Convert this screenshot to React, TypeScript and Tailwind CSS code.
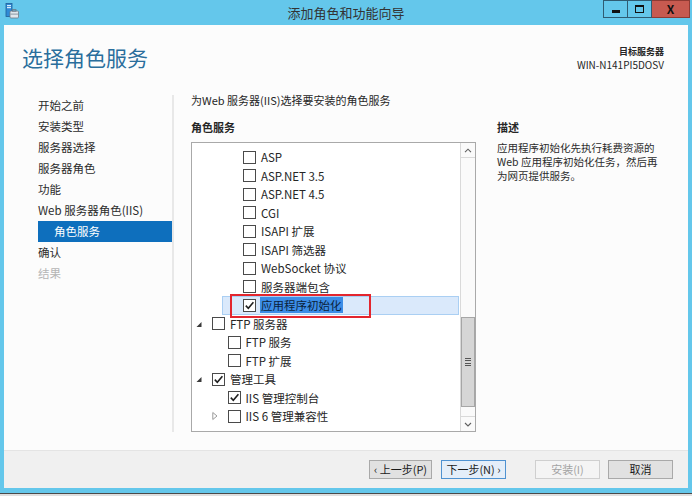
import React from "react";

type Row = {
  level: 1 | 2 | 3;
  label: string;
  checked?: boolean;
  selected?: boolean;
  expander?: "open" | "closed";
};

const rows: Row[] = [
  { level: 3, label: "ASP" },
  { level: 3, label: "ASP.NET 3.5" },
  { level: 3, label: "ASP.NET 4.5" },
  { level: 3, label: "CGI" },
  { level: 3, label: "ISAPI 扩展" },
  { level: 3, label: "ISAPI 筛选器" },
  { level: 3, label: "WebSocket 协议" },
  { level: 3, label: "服务器端包含" },
  { level: 3, label: "应用程序初始化", checked: true, selected: true },
  { level: 1, label: "FTP 服务器", expander: "open" },
  { level: 2, label: "FTP 服务" },
  { level: 2, label: "FTP 扩展" },
  { level: 1, label: "管理工具", checked: true, expander: "open" },
  { level: 2, label: "IIS 管理控制台", checked: true },
  { level: 2, label: "IIS 6 管理兼容性", expander: "closed" },
];

const indent: Record<number, string> = {
  1: "pl-[3px]",
  2: "pl-[18.5px]",
  3: "pl-[34px]",
};

function Checkbox({ checked }: { checked?: boolean }) {
  return (
    <span className="w-[13px] h-[13px] border border-[#4a4a4a] bg-white flex items-center justify-center shrink-0">
      {checked && (
        <svg width="11" height="11" viewBox="0 0 11 11">
          <polyline points="1.8,5.6 4.3,8.2 9.4,2.2" fill="none" stroke="#1f1f1f" strokeWidth="1.6" />
        </svg>
      )}
    </span>
  );
}

function Expander({ kind }: { kind?: "open" | "closed" }) {
  return (
    <span className="w-[16px] h-[16px] flex items-center justify-start shrink-0">
      {kind === "open" && (
        <svg width="8" height="8" viewBox="0 0 8 8">
          <polygon points="5.5,2 5.5,7 0.5,7" fill="#3a3a3a" />
        </svg>
      )}
      {kind === "closed" && (
        <svg width="8" height="10" viewBox="0 0 8 10">
          <polygon points="0.8,1.5 5,5 0.8,8.5" fill="none" stroke="#9a9a9a" strokeWidth="1" />
        </svg>
      )}
    </span>
  );
}

function TreeRow({ row }: { row: Row }) {
  return (
    <div className={`relative h-[18.5px] flex ${indent[row.level]}`}>
      <div
        className={`flex-1 flex items-center -ml-[4px] pl-[4px] mr-[1px] border ${
          row.selected ? "bg-[#dae9fb] border-[#aacff3]" : "border-transparent"
        }`}
      >
        <Expander kind={row.expander} />
        <Checkbox checked={row.checked} />
        <span
          className={`ml-[4px] text-[11.5px] leading-[16px] px-[1px] ${
            row.selected ? "bg-[#3c8de6] text-[#0b1f3a]" : "text-[#262626]"
          }`}
        >
          {row.label}
        </span>
      </div>
      {row.selected && (
        <div className="absolute left-[38px] top-[-2px] w-[141px] h-[24px] border-2 border-[#e3262e] pointer-events-none" />
      )}
    </div>
  );
}

function Button({
  children,
  variant = "normal",
}: {
  children: React.ReactNode;
  variant?: "normal" | "default" | "disabled";
}) {
  const cls =
    variant === "default"
      ? "bg-[#e4eef9] border-[#4f92d1] text-[#1a1a1a]"
      : variant === "disabled"
      ? "bg-[#f4f4f4] border-[#cfcfcf] text-[#a3a3a3]"
      : "bg-[#e1e1e1] border-[#a9a9a9] text-[#1a1a1a]";
  return (
    <div className={`h-[19px] flex items-center justify-center border text-[11px] leading-none ${cls}`}>
      {children}
    </div>
  );
}

function TitleIcon() {
  return (
    <svg width="14" height="16" viewBox="0 0 14 16">
      <rect x="1" y="0.5" width="6" height="13" fill="#2f8ad6" stroke="#1f5f9a" strokeWidth="0.8" />
      <rect x="2" y="2" width="4" height="1.2" fill="#d9ecfb" />
      <rect x="2" y="4" width="4" height="1.2" fill="#d9ecfb" />
      <rect x="5" y="8" width="8.5" height="7" rx="1" fill="#dfe6ec" stroke="#6c7a86" strokeWidth="0.8" />
      <rect x="7.5" y="6.6" width="3.5" height="1.6" fill="none" stroke="#6c7a86" strokeWidth="0.8" />
      <rect x="5.4" y="10.6" width="7.7" height="1" fill="#8a98a4" />
    </svg>
  );
}

export default function App() {
  return (
    <div className="w-[692px] h-[496px] flex flex-col bg-[#64c7eb] overflow-hidden font-['Noto_Sans_CJK_SC',sans-serif] text-[#262626]">
      {/* Title bar */}
      <div className="h-[25px] grid grid-cols-[1fr_auto_1fr] shrink-0">
        <div className="flex items-start pl-[5px] pt-[3px]">
          <TitleIcon />
        </div>
        <div className="text-[13px] leading-[25px] text-[#333333]">添加角色和功能向导</div>
        <div className="flex justify-end items-start pr-[2px]">
          <div className="w-[25px] h-[18px] border border-[#2f5b72] flex items-end justify-center pb-[4px]">
            <span className="w-[8px] h-[3px] bg-[#111]" />
          </div>
          <div className="w-[24px] h-[18px] border border-l-0 border-[#2f5b72] flex items-center justify-center">
            <span className="w-[9px] h-[8px] border border-t-[2px] border-[#111]" />
          </div>
          <div className="w-[38px] h-[18px] bg-[#c75a50] border border-l-0 border-[#8e3a33] flex items-center justify-center text-[12px] font-bold text-[#111] leading-none">
            X
          </div>
        </div>
      </div>

      {/* Content */}
      <div className="mx-[4px] h-[463px] flex flex-col bg-[#fcfcfc]">
        {/* Header */}
        <div className="h-[67px] flex justify-between shrink-0">
          <div className="pl-[18px] pt-[18px] text-[21px] leading-[28px] text-[#2a6e9c]">选择角色服务</div>
          <div className="pr-[24px] pt-[20px] flex flex-col items-end">
            <div className="text-[9px] leading-[13px] font-semibold text-[#262626]">目标服务器</div>
            <div className="text-[10px] leading-[13px] text-[#262626]">WIN-N141PI5DOSV</div>
          </div>
        </div>

        {/* Body */}
        <div className="h-[358px] flex shrink-0">
          {/* Nav */}
          <div className="w-[168px] pl-[34px] pt-[2.5px] flex flex-col text-[11.5px]">
            {["开始之前", "安装类型", "服务器选择", "服务器角色", "功能", "Web 服务器角色(IIS)"].map((t) => (
              <div key={t} className="h-[21px] leading-[21px] text-[#2b2b2b]">
                {t}
              </div>
            ))}
            <div className="h-[21px] leading-[21px] bg-[#0e6fbd] text-white pl-[16px]">角色服务</div>
            <div className="h-[21px] leading-[21px] text-[#2b2b2b]">确认</div>
            <div className="h-[21px] leading-[21px] text-[#b5b5b5]">结果</div>
          </div>
          <div className="w-[2px] h-[337px] mt-[3px] bg-[#e8e8e8]" />

          {/* Main */}
          <div className="flex-1 pl-[17px] flex flex-col">
            <div className="text-[11px] leading-[16px] text-[#262626]">为Web 服务器(IIS)选择要安装的角色服务</div>
            <div className="flex mt-[11px]">
              <div className="w-[285px] flex flex-col">
                <div className="text-[11px] leading-[16px] font-bold text-[#262626]">角色服务</div>
                <div className="mt-[7px] h-[290px] border border-[#a9a9a9] bg-white flex">
                  <div className="flex-1 pt-[5px] overflow-hidden">
                    {rows.map((r) => (
                      <TreeRow key={r.label} row={r} />
                    ))}
                  </div>
                  <div className="w-[15px] flex flex-col border-l border-[#d9d9d9] bg-[#fafafa]">
                    <div className="h-[15px] border-b border-[#d9d9d9] flex items-center justify-center">
                      <svg width="8" height="5" viewBox="0 0 8 5">
                        <polyline points="1,4.2 4,1.2 7,4.2" fill="none" stroke="#606060" strokeWidth="1.1" />
                      </svg>
                    </div>
                    <div className="h-[159px]" />
                    <div className="h-[90px] bg-[#d6d6d6] border border-[#a6a6a6] flex items-center justify-center">
                      <div className="flex flex-col gap-[1.5px]">
                        <span className="w-[6px] h-[1px] bg-[#555]" />
                        <span className="w-[6px] h-[1px] bg-[#555]" />
                        <span className="w-[6px] h-[1px] bg-[#555]" />
                        <span className="w-[6px] h-[1px] bg-[#555]" />
                      </div>
                    </div>
                    <div className="h-[10px] border-b border-[#d9d9d9]" />
                    <div className="flex-1 flex items-center justify-center">
                      <svg width="8" height="5" viewBox="0 0 8 5">
                        <polyline points="1,1 4,4 7,1" fill="none" stroke="#606060" strokeWidth="1.1" />
                      </svg>
                    </div>
                  </div>
                </div>
              </div>
              <div className="ml-[21px] w-[170px] flex flex-col">
                <div className="text-[11px] leading-[16px] font-bold text-[#262626]">描述</div>
                <div className="mt-[6px] text-[10.5px] leading-[14px] text-[#2b2b2b]">
                  <div>应用程序初始化先执行耗费资源的</div>
                  <div>Web 应用程序初始化任务，然后再</div>
                  <div>为网页提供服务。</div>
                </div>
              </div>
            </div>
          </div>
        </div>

        {/* Footer */}
        <div className="h-[38px] bg-[#f0f0f0] border-t border-[#e4e4e4] flex justify-end items-start pt-[9px] pr-[15px] shrink-0">
          <div className="w-[63px]">
            <Button>‹ 上一步(P)</Button>
          </div>
          <div className="w-[65px] ml-[9px]">
            <Button variant="default">下一步(N) ›</Button>
          </div>
          <div className="w-[65px] ml-[29px]">
            <Button variant="disabled">安装(I)</Button>
          </div>
          <div className="w-[65px] ml-[8px]">
            <Button>取消</Button>
          </div>
        </div>
      </div>

      <div className="h-[5px] shrink-0" />
      <div className="h-[1px] bg-[#4a4a4a] shrink-0" />
      <div className="h-[2px] bg-[#dedede] shrink-0" />
    </div>
  );
}
